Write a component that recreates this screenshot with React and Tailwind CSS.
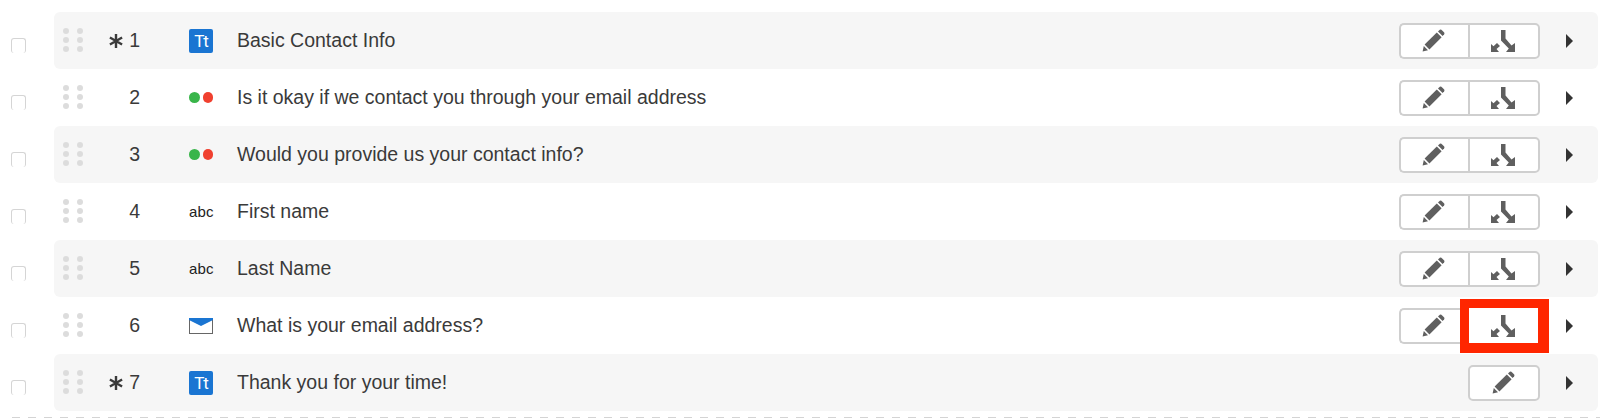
import React from "react";

const rows = [
  { n: "1", star: true, icon: "tt", text: "Basic Contact Info" },
  { n: "2", icon: "dots", text: "Is it okay if we contact you through your email address" },
  { n: "3", icon: "dots", text: "Would you provide us your contact info?" },
  { n: "4", icon: "abc", text: "First name" },
  { n: "5", icon: "abc", text: "Last Name" },
  { n: "6", icon: "mail", text: "What is your email address?", hl: true },
  { n: "7", star: true, icon: "tt", text: "Thank you for your time!", last: true },
];

function Pencil() {
  return (
    <svg width="23" height="23" viewBox="0 0 23 23">
      <path d="M0.6 22.4 L1.8 17 L6 21.2 Z" fill="#5f5f5f" />
      <path d="M2.6 15.6 L14.8 3.4 L19.6 8.2 L7.4 20.4 Z" fill="#5f5f5f" />
      <path d="M16 2.4 L17.8 0.8 Q18.6 0.2 19.4 0.8 L22.2 3.6 Q22.8 4.4 22.2 5.2 L20.6 7 Z" fill="#5f5f5f" />
    </svg>
  );
}

function Branch() {
  return (
    <svg width="24" height="22" viewBox="0 0 24 22">
      <path d="M10 0 H14.5 V8.5 L20.5 15.5 L24 13 V22 H15 L17.8 18.6 L10 10.5 Z" fill="#5f5f5f" />
      <path d="M0 14 L2.5 16.3 L6 13 L9 16 L5.5 19 L8 22 H0 Z" fill="#5f5f5f" />
    </svg>
  );
}

function Star() {
  return (
    <svg width="14" height="14" viewBox="0 0 14 14" stroke="#3a3a3a" strokeWidth="2.4">
      <path d="M7 0 V14 M0.9 3.5 L13.1 10.5 M0.9 10.5 L13.1 3.5" />
    </svg>
  );
}

function Icon({ type }) {
  if (type === "tt")
    return (
      <div className="flex h-[24px] w-[24px] items-center justify-center rounded-[2px] bg-[#1a75d2] font-['Roboto',sans-serif] text-[17px] font-normal leading-none tracking-[-1px] text-white">
        <span className="pt-[1px]">Tt</span>
      </div>
    );
  if (type === "dots")
    return (
      <div className="flex items-center gap-[3px]">
        <span className="h-[10.5px] w-[10.5px] rounded-full bg-[#39b54a]" />
        <span className="h-[10.5px] w-[10.5px] rounded-full bg-[#f0402f]" />
      </div>
    );
  if (type === "abc")
    return <span className="text-[15px] leading-none tracking-[0.2px] text-[#222]">abc</span>;
  return (
    <svg width="24" height="16" viewBox="0 0 24 16">
      <rect x="0.5" y="0.5" width="23" height="15" fill="#fff" stroke="#666" />
      <path d="M0 0 H24 V2 L12 8 L0 2 Z" fill="#1a75d2" />
    </svg>
  );
}

function Buttons({ last, hl }) {
  if (last)
    return (
      <div className="flex w-[141px] justify-end">
        <div className="flex h-[36px] w-[72px] items-center justify-center rounded-[5px] border-2 border-[#cfcfcf] bg-white pr-[2px]">
          <Pencil />
        </div>
      </div>
    );
  return (
    <div className="relative flex w-[141px]">
      <div className="flex h-[36px] w-[69px] items-center justify-center rounded-l-[5px] border-2 border-r-0 border-[#cfcfcf] bg-white pr-[2px]">
        <Pencil />
      </div>
      <div
        className={`flex h-[36px] w-[72px] items-center justify-center rounded-r-[5px] border-2 bg-white pr-[2px] ${
          hl ? "border-white" : "border-[#cfcfcf]"
        }`}
      >
        <Branch />
      </div>
      {hl && (
        <div className="absolute left-[61px] top-[-8.5px] h-[54px] w-[89px] border-t-[9px] border-r-[11px] border-b-[10px] border-l-[9px] border-[#ff2600]" />
      )}
    </div>
  );
}

export default function App() {
  return (
    <div className="h-[419px] overflow-hidden bg-white pt-[12px] font-['Liberation_Sans',Arial,sans-serif] text-[#3a3a3a]">
      {rows.map((r, i) => (
        <div key={r.n} className="flex h-[57px] items-center">
          <div className="ml-[11px] mt-[9px] h-[15px] w-[15px] rounded-[3px] border-x border-t border-[#d5d5d5]" />
          <div
            className={`ml-[28px] flex h-full w-[1544px] items-center rounded-[6px] ${
              i % 2 === 0 ? "bg-[#f6f6f6]" : "bg-white"
            }`}
          >
            <div className="ml-[9px] grid w-[20px] grid-cols-2 gap-x-[8px] gap-y-[3px] self-start pt-[16px]">
              {[0, 1, 2, 3, 4, 5].map((d) => (
                <span key={d} className="h-[6px] w-[6px] rounded-full bg-[#dcdcdc]" />
              ))}
            </div>
            <div className="flex w-[57px] items-center justify-end text-[19.5px]">
              {r.star && (
                <span className="mr-[6px] flex">
                  <Star />
                </span>
              )}
              <span>{r.n}</span>
            </div>
            <div className="ml-[49px] flex w-[48px] items-center">
              <Icon type={r.icon} />
            </div>
            <div className="flex-1 text-[19.5px]">{r.text}</div>
            <Buttons last={r.last} hl={r.hl} />
            <div className="ml-[26px] mr-[25px] h-0 w-0 border-y-[7px] border-l-[7px] border-y-transparent border-l-[#333]" />
          </div>
        </div>
      ))}
      <div className="ml-[12px] mt-[6px] h-[1px] bg-[repeating-linear-gradient(90deg,#d4d4d4_0_8px,transparent_8px_16px)]" />
    </div>
  );
}
